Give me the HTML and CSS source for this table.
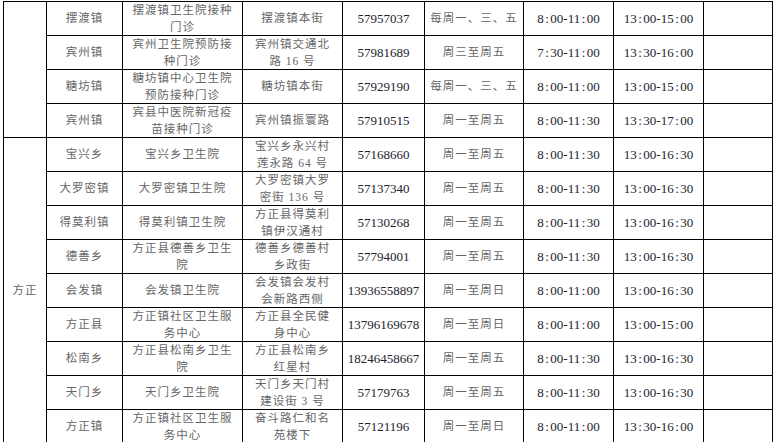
FILE: index.html
```html
<!DOCTYPE html>
<html lang="zh">
<head>
<meta charset="utf-8">
<link rel="stylesheet" href="styles.css">
</head>
<body>
<table class="sched">
<colgroup>
<col class="c-county"><col class="c-town"><col class="c-site"><col class="c-addr"><col class="c-tel"><col class="c-days"><col class="c-am"><col class="c-pm"><col class="c-note">
</colgroup>
<tbody>
<tr>
<td rowspan="4" class="cn"></td>
<td class="cn">摆渡镇</td><td class="cn">摆渡镇卫生院接种<br>门诊</td><td class="cn">摆渡镇本街</td><td class="num">57957037</td><td class="cn">每周一、三、五</td><td class="tm">8<span class="c">:</span>00-11<span class="c">:</span>00</td><td class="tm">13<span class="c">:</span>00-15<span class="c">:</span>00</td><td></td>
</tr>
<tr>
<td class="cn">宾州镇</td><td class="cn">宾州卫生院预防接<br>种门诊</td><td class="cn">宾州镇交通北<br>路 16 号</td><td class="num">57981689</td><td class="cn">周三至周五</td><td class="tm">7<span class="c">:</span>30-11<span class="c">:</span>00</td><td class="tm">13<span class="c">:</span>30-16<span class="c">:</span>00</td><td></td>
</tr>
<tr>
<td class="cn">糖坊镇</td><td class="cn">糖坊镇中心卫生院<br>预防接种门诊</td><td class="cn">糖坊镇本街</td><td class="num">57929190</td><td class="cn">每周一、三、五</td><td class="tm">8<span class="c">:</span>00-11<span class="c">:</span>00</td><td class="tm">13<span class="c">:</span>00-15<span class="c">:</span>00</td><td></td>
</tr>
<tr>
<td class="cn">宾州镇</td><td class="cn">宾县中医院新冠疫<br>苗接种门诊</td><td class="cn">宾州镇振寰路</td><td class="num">57910515</td><td class="cn">周一至周五</td><td class="tm">8<span class="c">:</span>00-11<span class="c">:</span>30</td><td class="tm">13<span class="c">:</span>30-17<span class="c">:</span>00</td><td></td>
</tr>
<tr>
<td rowspan="9" class="cn">方正</td>
<td class="cn">宝兴乡</td><td class="cn">宝兴乡卫生院</td><td class="cn">宝兴乡永兴村<br>莲永路 64 号</td><td class="num">57168660</td><td class="cn">周一至周五</td><td class="tm">8<span class="c">:</span>00-11<span class="c">:</span>30</td><td class="tm">13<span class="c">:</span>00-16<span class="c">:</span>30</td><td></td>
</tr>
<tr>
<td class="cn">大罗密镇</td><td class="cn">大罗密镇卫生院</td><td class="cn">大罗密镇大罗<br>密街 136 号</td><td class="num">57137340</td><td class="cn">周一至周五</td><td class="tm">8<span class="c">:</span>00-11<span class="c">:</span>30</td><td class="tm">13<span class="c">:</span>00-16<span class="c">:</span>30</td><td></td>
</tr>
<tr>
<td class="cn">得莫利镇</td><td class="cn">得莫利镇卫生院</td><td class="cn">方正县得莫利<br>镇伊汉通村</td><td class="num">57130268</td><td class="cn">周一至周五</td><td class="tm">8<span class="c">:</span>00-11<span class="c">:</span>30</td><td class="tm">13<span class="c">:</span>00-16<span class="c">:</span>30</td><td></td>
</tr>
<tr>
<td class="cn">德善乡</td><td class="cn">方正县德善乡卫生<br>院</td><td class="cn">德善乡德善村<br>乡政街</td><td class="num">57794001</td><td class="cn">周一至周五</td><td class="tm">8<span class="c">:</span>00-11<span class="c">:</span>30</td><td class="tm">13<span class="c">:</span>00-16<span class="c">:</span>30</td><td></td>
</tr>
<tr class="h33">
<td class="cn">会发镇</td><td class="cn">会发镇卫生院</td><td class="cn">会发镇会发村<br>会新路西侧</td><td class="num">13936558897</td><td class="cn">周一至周日</td><td class="tm">8<span class="c">:</span>00-11<span class="c">:</span>00</td><td class="tm">13<span class="c">:</span>00-16<span class="c">:</span>30</td><td></td>
</tr>
<tr>
<td class="cn">方正县</td><td class="cn">方正镇社区卫生服<br>务中心</td><td class="cn">方正县全民健<br>身中心</td><td class="num">13796169678</td><td class="cn">周一至周日</td><td class="tm">8<span class="c">:</span>00-11<span class="c">:</span>00</td><td class="tm">13<span class="c">:</span>00-15<span class="c">:</span>00</td><td></td>
</tr>
<tr>
<td class="cn">松南乡</td><td class="cn">方正县松南乡卫生<br>院</td><td class="cn">方正县松南乡<br>红星村</td><td class="num">18246458667</td><td class="cn">周一至周五</td><td class="tm">8<span class="c">:</span>00-11<span class="c">:</span>30</td><td class="tm">13<span class="c">:</span>00-16<span class="c">:</span>30</td><td></td>
</tr>
<tr>
<td class="cn">天门乡</td><td class="cn">天门乡卫生院</td><td class="cn">天门乡天门村<br>建设街 3 号</td><td class="num">57179763</td><td class="cn">周一至周五</td><td class="tm">8<span class="c">:</span>00-11<span class="c">:</span>30</td><td class="tm">13<span class="c">:</span>00-16<span class="c">:</span>30</td><td></td>
</tr>
<tr class="h32">
<td class="cn">方正镇</td><td class="cn">方正镇社区卫生服<br>务中心</td><td class="cn">奋斗路仁和名<br>苑楼下</td><td class="num">57121196</td><td class="cn">周一至周日</td><td class="tm">8<span class="c">:</span>00-11<span class="c">:</span>00</td><td class="tm">13<span class="c">:</span>30-16<span class="c">:</span>00</td><td></td>
</tr>
</tbody>
</table>
</body>
</html>
```
FILE: styles.css
```css
html, body {
  margin: 0;
  padding: 0;
  background: #fff;
}
body {
  padding: 1px 0 0 3px;
}
.sched {
  border-collapse: collapse;
  table-layout: fixed;
  width: 770px;
  font-family: "Liberation Serif", "Noto Sans CJK SC", serif;
}
.c-county { width: 43px; }
.c-town { width: 76px; }
.c-site { width: 120px; }
.c-addr { width: 100px; }
.c-tel { width: 82px; }
.c-days { width: 99px; }
.c-am { width: 90px; }
.c-pm { width: 90px; }
.c-note { width: 69px; }
.sched tr { height: 34px; }
.sched tr.h33 { height: 33px; }
.sched tr.h32 { height: 32px; }
.sched td {
  border: 1px solid #000;
  padding: 0;
  text-align: center;
  vertical-align: middle;
  white-space: nowrap;
  overflow: hidden;
}
.cn {
  font-size: 11.5px;
  line-height: 16.5px;
  letter-spacing: 1px;
  color: #666;
}
.num {
  font-size: 13px;
  line-height: 16px;
  color: #22222c;
}
.tm {
  font-size: 13px;
  line-height: 16px;
  color: #22222c;
}
.tm .c {
  margin: 0 1.5px;
}
```
